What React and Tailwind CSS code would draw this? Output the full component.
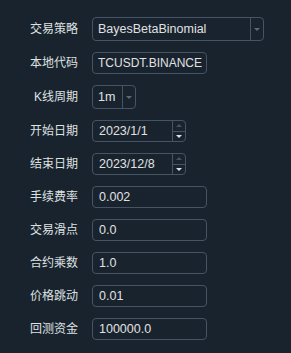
import React from "react"

const font = { fontFamily: "'Liberation Sans', 'Noto Sans CJK SC', sans-serif" }

function Combo({ value, width }) {
  return (
    <div className={`flex h-[24px] rounded-[4px] border border-[#455364] ${width}`}>
      <div className="flex flex-1 items-center pl-[5px] text-[12.5px] text-[#e0e1e3]">{value}</div>
      <div className="flex w-[13px] items-center justify-center border-l border-[#455364]">
        <div className="h-0 w-0 border-x-[3px] border-t-[3px] border-x-transparent border-t-[#5a6b7b]" />
      </div>
    </div>
  )
}

function Spin({ value }) {
  return (
    <div className="flex h-[22px] w-[94px] rounded-[4px] border border-[#455364]">
      <div className="flex flex-1 items-center pl-[6px] text-[12.5px] text-[#e0e1e3]">{value}</div>
      <div className="flex w-[13px] flex-col border-l border-[#455364]">
        <div className="flex flex-1 items-center justify-center border-b border-[#455364]">
          <div className="h-0 w-0 border-x-[3.5px] border-b-[3.5px] border-x-transparent border-b-[#455364]" />
        </div>
        <div className="flex flex-1 items-center justify-center">
          <div className="h-0 w-0 border-x-[3.5px] border-t-[3.5px] border-x-transparent border-t-[#e0e1e3]" />
        </div>
      </div>
    </div>
  )
}

function Input({ value, small }) {
  return (
    <div
      className={`flex h-[22px] w-[115px] items-center rounded-[4px] border border-[#455364] text-[#e0e1e3] ${
        small ? "pl-[5px] text-[12px]" : "pl-[6px] text-[12.5px]"
      }`}
    >
      {value}
    </div>
  )
}

const rows = [
  ["交易策略", <Combo value="BayesBetaBinomial" width="w-[172px]" />],
  ["本地代码", <Input value="TCUSDT.BINANCE" small />],
  ["K线周期", <Combo value="1m" width="w-[44px]" />],
  ["开始日期", <Spin value="2023/1/1" />],
  ["结束日期", <Spin value="2023/12/8" />],
  ["手续费率", <Input value="0.002" />],
  ["交易滑点", <Input value="0.0" />],
  ["合约乘数", <Input value="1.0" />],
  ["价格跳动", <Input value="0.01" />],
  ["回测资金", <Input value="100000.0" />],
]

export default function App() {
  return (
    <div className="h-[353px] w-[291px] bg-[#19232d] pt-[17px]" style={font}>
      <div className="grid grid-cols-[78px_1fr] gap-x-[14px] gap-y-[11px]">
        {rows.map(([label, field]) => (
          <React.Fragment key={label}>
            <div className="flex items-center justify-end text-[12px] text-[#dfe1e2]">{label}</div>
            <div className="flex">{field}</div>
          </React.Fragment>
        ))}
      </div>
    </div>
  )
}
